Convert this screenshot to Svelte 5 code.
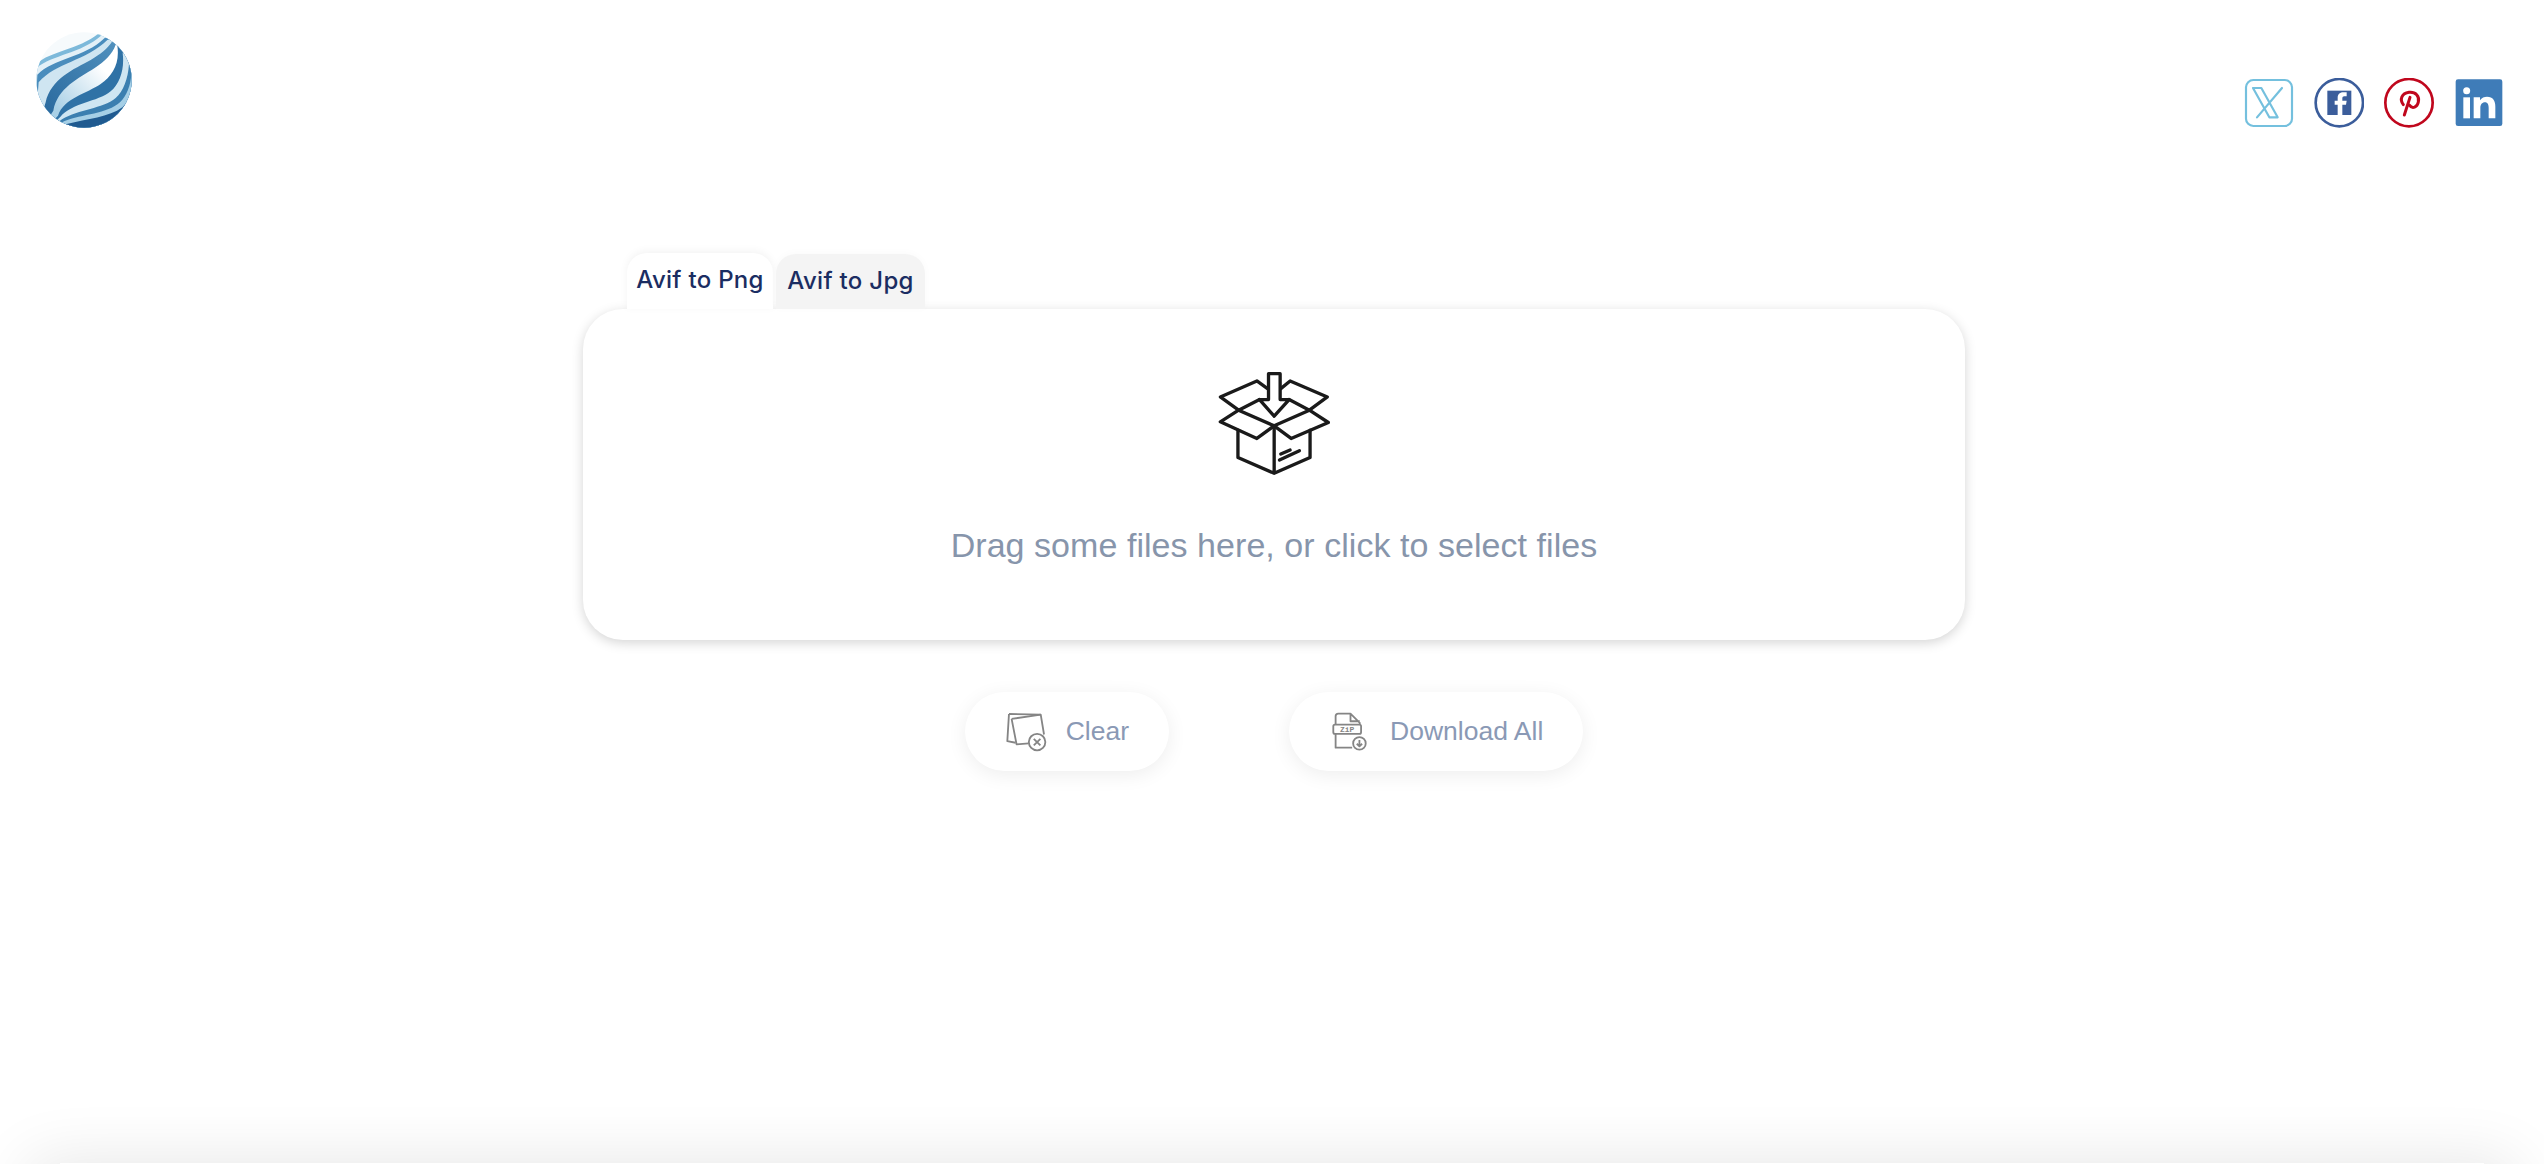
<script>
  let tab = $state('png')

  // swirl layers of the logo, painted from top-left to bottom-right
  const bands = [
    ['M108 190 C150 150 230 150 295 98', '#7db9da'],
    ['M108 202 C155 162 240 160 303 104', '#e3f0f7'],
    ['M110 222 C160 172 250 172 312 112', '#4a8dbd'],
    ['M114 245 C165 185 255 182 320 118', '#cfe5f1'],
    ['M135 305 C150 235 220 205 270 178 C300 160 320 145 335 122', 'url(#dark)'],
    ['M158 330 C170 262 235 232 282 202 C312 182 335 160 345 132', 'url(#pale)'],
    ['M172 345 C190 292 260 278 300 250 C335 225 358 190 350 135', '#2f72a6'],
    ['M178 350 C215 305 290 305 330 272 C358 248 372 205 366 158', '#cfe6f2'],
    ['M184 356 C235 325 305 325 345 292 C368 272 382 235 385 190', '#3b7fb0'],
    ['M190 362 C245 340 320 340 358 305 C378 285 390 255 392 220', '#a5cfe6'],
    ['M198 370 C260 355 325 350 365 320 C385 302 395 275 397 250', '#1f5a90']
  ]
</script>

<div class="page">
  <header class="top">
    <a class="logo" href="#top" aria-label="home">
      <svg viewBox="100 88 300 300" width="100" height="100">
        <defs>
          <clipPath id="ball"><circle cx="250" cy="238" r="143" /></clipPath>
          <linearGradient id="dark" x1="1" y1="0" x2="0" y2="1">
            <stop offset="0" stop-color="#5b9bc6" />
            <stop offset="1" stop-color="#1f5f96" />
          </linearGradient>
          <linearGradient id="pale" x1="1" y1="0" x2="0" y2="1">
            <stop offset="0.35" stop-color="#ffffff" />
            <stop offset="0.75" stop-color="#a9d0e6" />
          </linearGradient>
        </defs>
        <g clip-path="url(#ball)">
          <rect x="100" y="88" width="300" height="300" fill="#f6fafc" />
          {#each bands as [d, fill]}
            <path d="{d} L420 90 L420 420 L100 420 Z" {fill} />
          {/each}
        </g>
      </svg>
    </a>

    <nav class="social">
      <svg viewBox="72 54 150 150" width="50" height="50" aria-label="X">
        <rect x="78" y="60" width="138" height="138" rx="22" fill="none" stroke="#74c0de" stroke-width="6.5" />
        <path d="M99 84 H124 L173 172 H148 Z M111 172 L186 84" fill="none" stroke="#74c0de" stroke-width="6.5" stroke-linejoin="round" stroke-linecap="round" />
      </svg>
      <svg viewBox="280 54 150 150" width="50" height="50" aria-label="Facebook">
        <circle cx="356" cy="128" r="71" fill="none" stroke="#3b5d9b" stroke-width="8" />
        <rect x="320" y="92" width="72" height="73" fill="#3b5d9b" />
        <path d="M351 165 V134 H342 V122 H351 V113 C351 102 359 97 368 97 H378 V109 H371 C367 109 365 111 365 115 V122 H378 L376 134 H365 V165 Z" fill="#fff" />
      </svg>
      <svg viewBox="491 54 150 150" width="50" height="50" aria-label="Pinterest">
        <circle cx="566" cy="128" r="71" fill="none" stroke="#c0071d" stroke-width="8" />
        <path d="M549 134 C537 118 544 100 566 97 C586 95 598 108 594 126 C591 142 576 148 568 136 M569 112 L552 165" fill="none" stroke="#c0071d" stroke-width="9" stroke-linecap="round" />
      </svg>
      <svg viewBox="703 54 150 150" width="50" height="50" aria-label="LinkedIn">
        <rect x="708" y="58" width="140" height="140" rx="7" fill="#3f7cb8" />
        <circle cx="741" cy="92" r="10.5" fill="#fff" />
        <rect x="731" y="112" width="20" height="63" fill="#fff" />
        <path d="M762 112 H781 V121 C786 113 794 110 802 110 C820 110 827 122 827 140 V175 H807 V144 C807 134 804 127 796 127 C787 127 782 134 782 144 V175 H762 Z" fill="#fff" />
      </svg>
    </nav>
  </header>

  <main class="converter">
    <div class="tabs">
      <button class="tab" class:active={tab === 'png'} onclick={() => (tab = 'png')}>Avif to Png</button>
      <button class="tab" class:active={tab === 'jpg'} onclick={() => (tab = 'jpg')}>Avif to Jpg</button>
    </div>

    <div class="dropzone">
      <svg viewBox="83 30 340 320" width="113" height="107" class="box">
        <g fill="none" stroke="#1a1a1a" stroke-width="10" stroke-linejoin="round" stroke-linecap="round">
          <path d="M235 40 H270 V118 H297 L252 168 L208 118 H235 Z" />
          <path d="M232 85 L200 62 L90 110 L145 150 L208 118" />
          <path d="M272 85 L300 62 L412 110 L358 150 L297 118" />
          <path d="M145 150 L252 197 L358 150" />
          <path d="M145 150 L90 185 L200 235 L252 197 L303 235 L415 187 L358 150" />
          <path d="M143 210 V292 L252 340 L360 292 V210 M252 197 V340" />
          <path d="M272 282 L300 270 M268 300 L328 272" />
        </g>
      </svg>
      <p class="hint">Drag some files here, or click to select files</p>
    </div>

    <div class="actions">
      <button class="action clear">
        <svg viewBox="190 125 130 125" width="43" height="42">
          <g fill="none" stroke="#858585" stroke-width="5.5" stroke-linejoin="round">
            <path d="M202 133 L298 135 L308 195 M202 133 L197 215 L222 220" />
            <path d="M210 148 L298 135 M210 148 L225 225 L262 222" />
            <circle cx="287" cy="218" r="25" />
            <path d="M277 208 L297 228 M297 208 L277 228" />
          </g>
        </svg>
        <span>Clear</span>
      </button>
      <button class="action download">
        <svg viewBox="175 125 130 125" width="43" height="42">
          <g fill="none" stroke="#858585" stroke-width="5.5" stroke-linejoin="round">
            <path d="M195 165 V140 Q195 132 203 132 H240 L268 160 V165 M240 132 V155 H268" />
            <rect x="188" y="165" width="84" height="28" rx="5" />
            <path d="M195 193 V235 H245" />
            <circle cx="267" cy="222" r="19" />
            <path d="M267 212 V231 M259 223 L267 231 L275 223" />
          </g>
          <text x="230" y="187" text-anchor="middle" class="zip">ZiP</text>
        </svg>
        <span>Download All</span>
      </button>
    </div>
  </main>

  <footer class="bottom"></footer>
</div>

<style>
  :global(body) {
    background: #fff;
  }
  .page {
    min-height: 1164px;
    display: flex;
    flex-direction: column;
    font-family: "Liberation Sans", Arial, sans-serif;
  }
  .top {
    display: flex;
    justify-content: space-between;
    padding: 30px 40px 0 34px;
    height: 130px;
    box-sizing: border-box;
  }
  .logo {
    display: block;
    height: 100px;
  }
  .logo svg,
  .social svg {
    display: block;
  }
  .social {
    display: flex;
    gap: 20px;
    margin-top: 48px;
    height: 50px;
  }
  .converter {
    width: 1382px;
    margin: 123px auto 0;
    transform: translateX(2px);
  }
  .tabs {
    display: flex;
    gap: 3px;
    padding-left: 44px;
    height: 56px;
    align-items: flex-end;
    position: relative;
    z-index: 1;
  }
  .tab {
    width: 146px;
    height: 55px;
    padding: 0 0 2px;
    border: none;
    border-radius: 20px 20px 0 0;
    background: #f4f4f4;
    color: #1b2d62;
    font-family: Inter, "Liberation Sans", sans-serif;
    font-size: 24px;
    font-weight: 500;
    letter-spacing: 0.3px;
    box-shadow: 0 -1px 8px rgba(0, 0, 0, 0.025);
    cursor: pointer;
  }
  .tab:last-child {
    width: 149px;
  }
  .tab.active {
    height: 56px;
    background: #fff;
    padding-bottom: 4px;
    box-shadow: 0 -2px 8px rgba(0, 0, 0, 0.05);
  }
  .dropzone {
    height: 331px;
    box-sizing: border-box;
    padding-top: 61px;
    display: flex;
    flex-direction: column;
    align-items: center;
    background: #fff;
    border-radius: 40px;
    box-shadow: 0 3px 12px rgba(0, 0, 0, 0.17);
  }
  .box {
    display: block;
  }
  .hint {
    margin: 48px 0 0;
    font-size: 34px;
    line-height: 40px;
    letter-spacing: 0.05px;
    color: #8795ab;
  }
  .actions {
    display: flex;
    justify-content: center;
    gap: 120px;
    margin-top: 52px;
  }
  .action {
    height: 79px;
    display: flex;
    align-items: center;
    gap: 18px;
    padding: 0 40px;
    border: none;
    border-radius: 40px;
    background: #fff;
    color: #8a99b5;
    font-family: "Liberation Sans", Arial, sans-serif;
    font-size: 26.5px;
    box-shadow: 0 4px 20px rgba(0, 0, 0, 0.07);
    cursor: pointer;
  }
  .zip {
    font-family: "Liberation Mono", monospace;
    font-size: 24px;
    font-weight: 700;
    fill: #858585;
  }
  .bottom {
    margin: auto 60px 0;
    height: 1px;
    box-shadow: 0 30px 65px 30px rgba(0, 0, 0, 0.11);
  }
</style>
